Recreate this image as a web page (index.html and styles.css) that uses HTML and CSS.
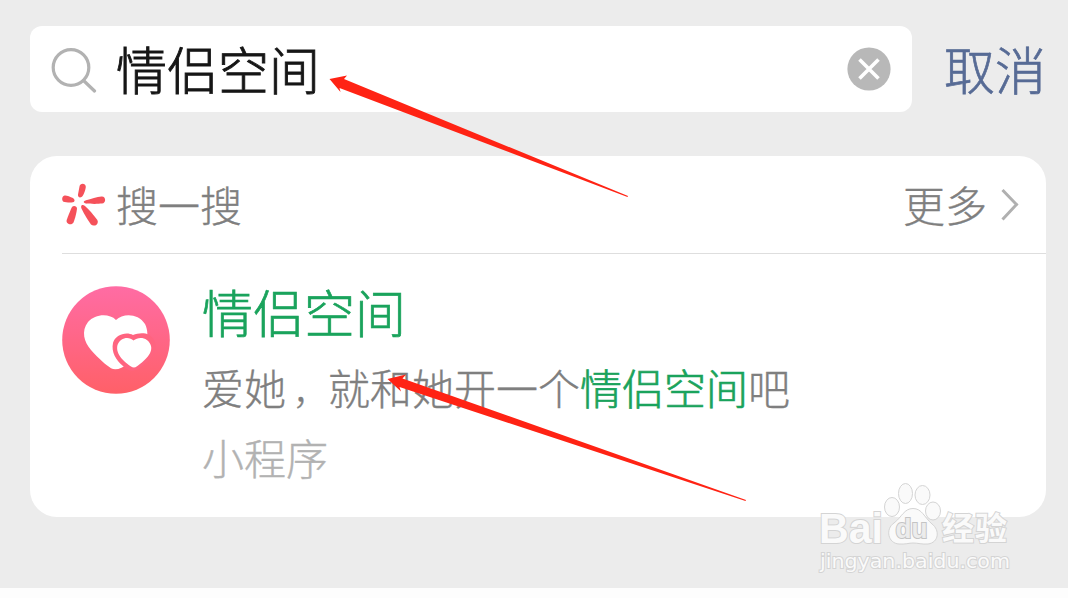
FILE: index.html
```html
<!DOCTYPE html>
<html lang="zh-CN">
<head>
  <meta charset="UTF-8">
  <title>搜一搜</title>
  <link rel="stylesheet" href="styles.css">
</head>
<body>
  <div class="page">
    <header class="search-bar">
      <div class="search-box">
        <svg class="search-icon" width="48" height="48" viewBox="0 0 48 48">
          <circle cx="22" cy="22.500" r="17.800"/>
          <path d="M34.500 35.500 L45.500 46"/>
        </svg>
        <span class="search-text">情侣空间</span>
        <svg class="clear-icon" width="44" height="44" viewBox="0 0 44 44">
          <circle cx="22" cy="22" r="21.600"/>
          <path d="M12.500 12.500 L31.500 31.500 M31.500 12.500 L12.500 31.500"/>
        </svg>
      </div>
      <a class="cancel">取消</a>
    </header>

    <section class="card">
      <div class="card-head">
        <svg class="spark" width="44" height="44" viewBox="0 0 44 44">
          <path d="M17.500 3.500 C18 -.5 24 -.2 23.800 4 C23.500 7 21.500 13 19.500 14 C17.500 15 15.800 14 16 11.500 Z"/>
          <path d="M2.500 12.500 C4 12 8 13.500 11 15 C13.500 17 13 19.500 9.500 19.600 C6 19.700 3 19.400 1.500 18.800 C-.7 17.500 0 12.800 2.500 12.500 Z"/>
          <path d="M39.500 13.500 C44 13 44.500 20 40 20.600 C36 21 28 21 24 20.500 C21 20 21 18.200 24 17.300 C29 15.800 35 14 39.500 13.500 Z"/>
          <path d="M10 24 C11.500 22.300 15 23 15 25.500 C14.700 29 13 36 11.500 39.500 C9.500 43 3.500 41 4.700 37 C6 33 8.500 27 10 24 Z"/>
          <path d="M19.500 25.500 C18.200 22 20.500 21 23 23 C27 26.500 32 32.500 35 36.500 C38 41 32 44.500 29 41.500 C26 37.500 22 31 19.500 25.500 Z"/>
        </svg>
        <span class="card-title">搜一搜</span>
        <span class="more">更多</span>
        <svg class="chevron" width="18" height="34" viewBox="0 0 18 34">
          <path d="M1.500 2 L15.500 16.500 L1.500 31.500"/>
        </svg>
      </div>

      <div class="result">
        <svg class="avatar" width="108" height="108" viewBox="0 0 108 108">
          <defs>
            <linearGradient id="pink" x1="0" y1="0" x2="0" y2="1">
              <stop offset="0" stop-color="#ff6ca4"/>
              <stop offset="1" stop-color="#ff6068"/>
            </linearGradient>
          </defs>
          <circle cx="54" cy="54" r="53.800" fill="url(#pink)"/>
          <path class="heart" d="M54 34 C47 27 33 28 26 36 C19 45 22 56 29 64 C37 73 44 79 49 82.200 C54 85 60 82 66 78 L84 58 C86 51 86 44 83 38 C76 27 61 27 54 34 Z"/>
          <path class="heart-cover" d="M71 49 C64 45 53 49 51 57 C49 66 54 74 61 80 C66 86 74 86 80 80 C90 73 97 64 92 54 C88 46 78 46 71 49 Z"/>
          <path class="heart" d="M71.500 54.500 C67 50 58 51.500 55.500 59 C53 69 64 77 69 80.500 C71 82 73 82 75 80.300 C81 76 91 68 89 60 C86.500 51.500 77 50 71.500 54.500 Z"/>
        </svg>
        <div class="result-body">
          <div class="result-title">情侣空间</div>
          <div class="result-desc">爱她<span class="comma">，</span>就和她开一个<em>情侣空间</em>吧</div>
          <div class="result-type">小程序</div>
        </div>
      </div>
    </section>
  </div>

  <svg class="arrows" width="1068" height="598" viewBox="0 0 1068 598">
    <path d="M329.500 79 L347 75.500 L344 79 L628 196 L627.500 197 L339.500 88 L340.500 92 Z"/>
    <path d="M387.500 379 L406 374.500 L402.500 378.500 L746 500 L745.500 501 L399.500 387 L401 391.500 Z"/>
  </svg>

  <div class="watermark">
    <svg width="200" height="110" viewBox="0 0 200 110">
      <ellipse cx="77" cy="32" rx="7.500" ry="9.500"/>
      <ellipse cx="90.500" cy="18.500" rx="7" ry="10"/>
      <ellipse cx="107.500" cy="20" rx="7.500" ry="9.500"/>
      <ellipse cx="118" cy="36" rx="7.500" ry="9"/>
      <path d="M98 33.500 C89 33.500 87 42 79 48 C70 54 73 68.500 84 69 C90 69.500 94 68 98 68 C103 68 107 69.500 113 69 C124 67.500 125 55 117 49 C109 42 107 33.500 98 33.500 Z"/>
      <text class="bai" x="4" y="67.500" textLength="64" lengthAdjust="spacingAndGlyphs">Bai</text>
      <text class="du" x="80.500" y="63" textLength="32" lengthAdjust="spacingAndGlyphs">du</text>
      <text class="jingyan" x="127" y="65" textLength="65">经验</text>
      <text class="url" x="5" y="93" textLength="190" lengthAdjust="spacingAndGlyphs">jingyan.baidu.com</text>
    </svg>
  </div>
</body>
</html>
```
FILE: styles.css
```css
body {
  margin: 0;
  background-color: #fdfdfd;
  font-family: "Noto Sans CJK SC", sans-serif;
  font-weight: 300;
  overflow: hidden;
}

.page {
  box-sizing: border-box;
  height: 588px;
  padding: 26px 22px 0 30px;
  background-color: #ececec;
  -webkit-text-stroke-width: 0.4px;
}

/* Search bar */
.search-bar {
  display: flex;
  align-items: center;
  height: 86px;
}

.search-box {
  display: flex;
  align-items: center;
  box-sizing: border-box;
  width: 882px;
  height: 86px;
  padding: 0 21px 0 19px;
  background-color: #fff;
  border-radius: 12px;
}

.search-icon {
  fill: none;
  stroke: #b2b2b2;
  stroke-width: 3.2;
  stroke-linecap: round;
}

.search-text {
  flex: 1;
  margin-left: 19px;
  padding-bottom: 3px;
  font-size: 51px;
  line-height: 80px;
  color: #161616;
  -webkit-text-stroke-width: 0.9px;
}

.clear-icon circle {
  fill: #b8b8b8;
}

.clear-icon path {
  stroke: #fff;
  stroke-width: 3.6;
}

.cancel {
  margin-left: 32px;
  padding-bottom: 3px;
  font-size: 51px;
  line-height: 80px;
  color: #576b95;
  -webkit-text-stroke-width: 0.7px;
}

/* Result card */
.card {
  width: 1016px;
  height: 361px;
  margin-top: 44px;
  background-color: #fff;
  border-radius: 27px;
}

.card-head {
  display: flex;
  align-items: center;
  height: 97px;
  margin-left: 32px;
  padding-right: 27px;
  border-bottom: 1px solid #dedede;
  font-size: 42px;
  line-height: 60px;
  color: #7f7f7f;
}

.spark {
  fill: #f5515a;
}

.card-title {
  flex: 1;
  margin-left: 10px;
}

.card-title,
.more {
  padding-bottom: 2px;
}

.chevron {
  margin-left: 14px;
  fill: none;
  stroke: #b0b0b0;
  stroke-width: 3;
}

.result {
  display: flex;
  padding: 32px 0 0 32px;
}

.heart {
  fill: #fff;
}

.heart-cover {
  fill: #ff6480;
}

.result-body {
  margin-left: 32px;
  white-space: nowrap;
}

.result-title {
  margin-top: -10px;
  font-size: 51px;
  line-height: 70px;
  color: #1aa35c;
  -webkit-text-stroke-width: 0.7px;
}

.result-desc {
  margin-top: 8px;
  font-size: 42px;
  line-height: 66px;
  color: #7f7f7f;
}

.result-desc em {
  font-style: normal;
  color: #1aa35c;
  -webkit-text-stroke-width: 0.7px;
}

.comma {
  margin-left: 7px;
  font-size: 35px;
  line-height: 1;
}

.result-type {
  margin-top: 4px;
  font-size: 42px;
  line-height: 66px;
  color: #b2b2b2;
}

/* Red arrows over the page */
.arrows {
  position: absolute;
  top: 0;
  left: 0;
  fill: #ff2314;
}

/* Watermark */
.watermark {
  position: absolute;
  top: 475px;
  left: 815px;
  fill: #fafafa;
  stroke: #d4d4d4;
  stroke-width: 1;
}

.watermark text {
  paint-order: stroke;
  stroke-width: 2;
}

.bai,
.du {
  font-family: "Liberation Sans", sans-serif;
  font-weight: bold;
}

.bai {
  font-size: 43px;
}

.watermark .du {
  font-size: 27px;
  fill: #ececec;
  stroke: #c4c4c4;
}

.jingyan {
  font-size: 32px;
  font-weight: bold;
}

.url {
  font-family: "DejaVu Sans", sans-serif;
  font-weight: 400;
  font-size: 20px;
}
```
